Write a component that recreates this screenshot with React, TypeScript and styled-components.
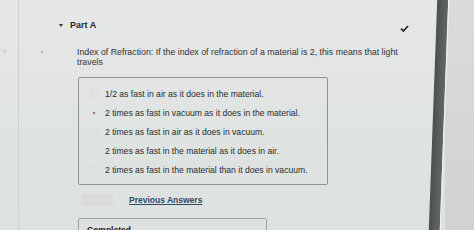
import React from 'react';
import styled, { createGlobalStyle } from 'styled-components';

const GlobalStyle = createGlobalStyle`
  html, body {
    margin: 0;
    padding: 0;
    background: #e0e3e2;
    font-family: 'Liberation Sans', Arial, sans-serif;
    color: #333;
  }
`;

const Screen = styled.div`
  width: 474px;
  height: 230px;
  display: flex;
  overflow: hidden;
  background: linear-gradient(180deg, #e6e8e7 0%, #dfe3e2 60%, #dde1e0 100%);
`;

const Gutter = styled.div`
  width: 18px;
  flex-shrink: 0;
  border-right: 1px solid #ccd0cf;
  position: relative;
`;

const GutterMark = styled.span`
  position: absolute;
  left: 3px;
  top: 46px;
  font-size: 9px;
  color: #a9adac;
`;

const Main = styled.div`
  width: 414px;
  flex-shrink: 0;
  box-sizing: border-box;
  display: flex;
  flex-direction: column;
  padding: 19px 24px 0 22px;
  position: relative;
  & > * {
    flex-shrink: 0;
  }
`;

const Dot = styled.span`
  position: absolute;
  left: 22px;
  top: 51px;
  width: 2px;
  height: 2px;
  border-radius: 50%;
  background: #9a9e9d;
`;

const PartHeader = styled.div`
  display: flex;
  align-items: center;
  height: 12px;
  padding-left: 18px;
`;

const Caret = styled.span`
  width: 0;
  height: 0;
  border-left: 2.5px solid transparent;
  border-right: 2.5px solid transparent;
  border-top: 3px solid #333;
  margin-right: 7px;
`;

const PartTitle = styled.span`
  font-size: 9px;
  font-weight: bold;
  color: #262626;
`;

const Check = styled.span`
  margin-left: auto;
  margin-top: 7px;
  display: flex;
`;

const Question = styled.div`
  margin: 16px 0 0 36px;
  width: 334px;
  font-size: 8.8px;
  line-height: 10px;
  color: #333;
`;

const AnswerBox = styled.div`
  margin: 10px 0 0 37px;
  width: 250px;
  height: 108px;
  box-sizing: border-box;
  border: 1px solid #8f9392;
  border-radius: 2px;
  padding: 6px 0 0 11px;
  display: flex;
  flex-direction: column;
`;

const Option = styled.div`
  display: flex;
  align-items: center;
  height: 19px;
  font-size: 8.6px;
  color: #2c2c2c;
`;

const Radio = styled.span<{ selected?: boolean }>`
  width: 6px;
  height: 6px;
  border-radius: 50%;
  margin-right: 7px;
  background: ${({ selected }) =>
    selected ? 'radial-gradient(circle, #a06a78 0 1.2px, transparent 1.6px)' : 'transparent'};
  border: 1px solid ${({ selected }) => (selected ? 'transparent' : '#d9dcdb')};
`;

const Actions = styled.div`
  display: flex;
  align-items: center;
  margin: 8px 0 0 40px;
  height: 14px;
`;

const DisabledButton = styled.span`
  width: 32px;
  height: 12px;
  border-radius: 2px;
  background: #d8dbda;
  margin-right: 16px;
`;

const PrevLink = styled.span`
  font-size: 8.5px;
  font-weight: bold;
  color: #34496a;
  text-decoration: underline;
`;

const CompletedBox = styled.div`
  margin: 11px 0 0 37px;
  width: 189px;
  height: 30px;
  box-sizing: border-box;
  border: 1px solid #9ea2a1;
  border-radius: 2px;
  padding: 6px 0 0 8px;
  font-size: 8.5px;
  line-height: 10px;
  font-weight: bold;
  color: #222;
`;

const Bezel = styled.div`
  width: 11px;
  flex-shrink: 0;
  background: linear-gradient(90deg, #4b4f4e 0%, #5a5e5d 60%, #626665 100%);
  border-right: 1.5px solid #f4f6f5;
  transform: skewX(-2.1deg);
`;

const Outside = styled.div`
  flex: 1;
  background: linear-gradient(180deg, #d9dcdb, #d0d3d2);
`;

const options = [
  '1/2 as fast in air as it does in the material.',
  '2 times as fast in vacuum as it does in the material.',
  '2 times as fast in air as it does in vacuum.',
  '2 times as fast in the material as it does in air.',
  '2 times as fast in the material than it does in vacuum.',
];

export default function App() {
  return (
    <>
      <GlobalStyle />
      <Screen>
        <Gutter>
          <GutterMark>›</GutterMark>
        </Gutter>
        <Main>
          <Dot />
          <PartHeader>
            <Caret />
            <PartTitle>Part A</PartTitle>
            <Check>
              <svg width="9" height="7" viewBox="0 0 9 7">
                <path d="M1 3.6 L3.4 6 L8 1" fill="none" stroke="#2a2a2a" strokeWidth="1.8" />
              </svg>
            </Check>
          </PartHeader>
          <Question>
            Index of Refraction: If the index of refraction of a material is 2, this means that light travels
          </Question>
          <AnswerBox>
            {options.map((text, i) => (
              <Option key={text}>
                <Radio selected={i === 1} />
                {text}
              </Option>
            ))}
          </AnswerBox>
          <Actions>
            <DisabledButton />
            <PrevLink>Previous Answers</PrevLink>
          </Actions>
          <CompletedBox>Completed</CompletedBox>
        </Main>
        <Bezel />
        <Outside />
      </Screen>
    </>
  );
}
